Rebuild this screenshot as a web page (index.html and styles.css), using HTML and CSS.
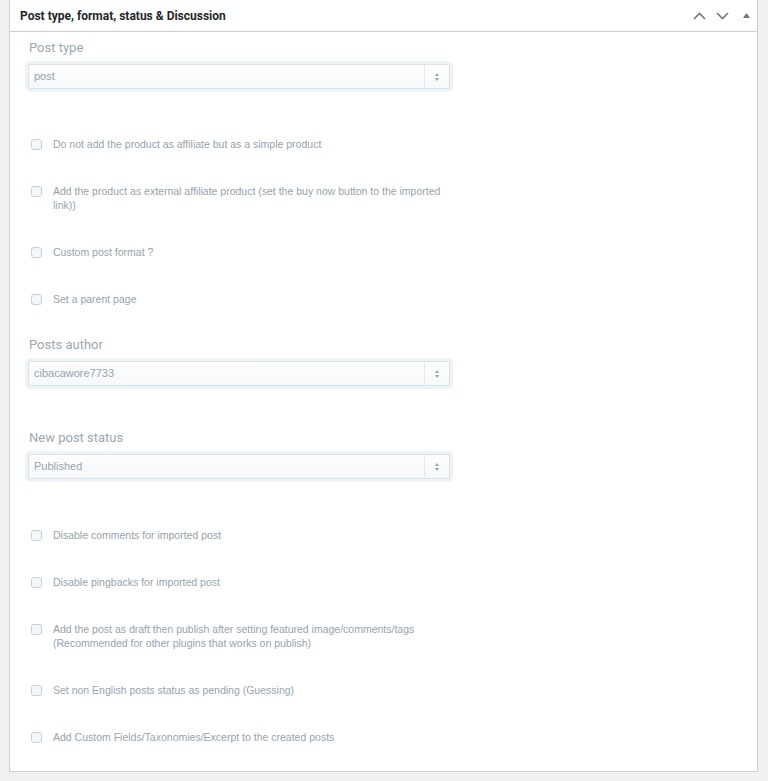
FILE: index.html
```html
<!DOCTYPE html>
<html lang="en">
<head>
    <meta charset="UTF-8">
    <meta name="viewport" content="width=device-width, initial-scale=1.0">
    <title>Post type, format, status &amp; Discussion</title>
    <link rel="stylesheet" href="styles.css">
</head>
<body>
    <div class="postbox">
        <!-- Cabeçalho da caixa -->
        <div class="postbox-header">
            <h2 class="postbox-title">Post type, format, status &amp; Discussion</h2>
            <div class="handle-actions">
                <svg class="handle" width="13" height="8" viewBox="0 0 13 8"><path d="M1 7 L6.5 1.5 L12 7" fill="none" stroke="#72777c" stroke-width="1.6"/></svg>
                <svg class="handle" width="13" height="8" viewBox="0 0 13 8"><path d="M1 1 L6.5 6.5 L12 1" fill="none" stroke="#72777c" stroke-width="1.6"/></svg>
                <svg class="handle toggle" width="7" height="5" viewBox="0 0 7 5"><path d="M0 5 L3.5 0 L7 5 Z" fill="#72777c"/></svg>
            </div>
        </div>

        <div class="inside">
            <div class="field">
                <label class="field-label">Post type</label>
                <div class="select-wrap">
                    <div class="select">
                        <span class="select-value">post</span>
                        <span class="select-arrow"><i class="up"></i><i class="down"></i></span>
                    </div>
                </div>
            </div>

            <div class="check first">
                <span class="box"></span>
                <span class="check-text">Do not add the product as affiliate but as a simple product</span>
            </div>
            <div class="check">
                <span class="box"></span>
                <span class="check-text">Add the product as external affiliate product (set the buy now button to the imported link))</span>
            </div>
            <div class="check">
                <span class="box"></span>
                <span class="check-text">Custom post format ?</span>
            </div>
            <div class="check">
                <span class="box"></span>
                <span class="check-text">Set a parent page</span>
            </div>

            <div class="field author">
                <label class="field-label">Posts author</label>
                <div class="select-wrap">
                    <div class="select">
                        <span class="select-value">cibacawore7733</span>
                        <span class="select-arrow"><i class="up"></i><i class="down"></i></span>
                    </div>
                </div>
            </div>

            <div class="field status">
                <label class="field-label">New post status</label>
                <div class="select-wrap">
                    <div class="select">
                        <span class="select-value">Published</span>
                        <span class="select-arrow"><i class="up"></i><i class="down"></i></span>
                    </div>
                </div>
            </div>

            <div class="check first-after-status">
                <span class="box"></span>
                <span class="check-text">Disable comments for imported post</span>
            </div>
            <div class="check">
                <span class="box"></span>
                <span class="check-text">Disable pingbacks for imported post</span>
            </div>
            <div class="check">
                <span class="box"></span>
                <span class="check-text">Add the post as draft then publish after setting featured image/comments/tags (Recommended for other plugins that works on publish)</span>
            </div>
            <div class="check">
                <span class="box"></span>
                <span class="check-text">Set non English posts status as pending (Guessing)</span>
            </div>
            <div class="check">
                <span class="box"></span>
                <span class="check-text">Add Custom Fields/Taxonomies/Excerpt to the created posts</span>
            </div>
        </div>
    </div>
</body>
</html>
```

FILE: styles.css
```css
html, body {
    margin: 0;
    padding: 0;
}

body {
    background: #f1f1f1;
    font-family: "Liberation Sans", Arial, sans-serif;
    color: #8c9ba5;
}

/* Caixa principal */
.postbox {
    margin: -1px 0 0 9px;
    width: 747px;
    background: #fff;
    border: 1px solid #ccd0d4;
    box-shadow: 0 1px 1px rgba(0, 0, 0, 0.04);
}

.postbox-header {
    display: flex;
    align-items: center;
    justify-content: space-between;
    height: 31px;
    border-bottom: 1px solid #ccd0d4;
}

.postbox-title {
    margin: 0 0 0 10px;
    font-family: Roboto, "Liberation Sans", sans-serif;
    font-size: 12px;
    font-weight: 700;
    color: #23282d;
}

.handle-actions {
    display: flex;
    align-items: center;
    gap: 10px;
    margin-right: 7px;
}

.handle.toggle {
    margin-left: 4px;
}

/* Conteúdo */
.inside {
    display: flex;
    flex-direction: column;
    padding: 8px 15px 27px;
}

.field-label {
    display: block;
    margin: 0 0 5px 4px;
    font-family: Roboto, "Liberation Sans", sans-serif;
    font-size: 13px;
    line-height: 16px;
    color: #9aa8b0;
}

.field.author {
    margin-top: 31px;
}

.field.status {
    margin-top: 41px;
}

.select-wrap {
    width: 422px;
    padding: 3px;
    background: #edf3f6;
    border-radius: 5px;
}

.select {
    display: flex;
    height: 23px;
    border: 1px solid #d9e2e7;
    border-radius: 2px;
    background: linear-gradient(#fdfdfd, #f6f8f9);
}

.select-value {
    flex: 1;
    padding-left: 5px;
    font-size: 11px;
    line-height: 23px;
    color: #97a4ac;
}

.select-arrow {
    display: flex;
    flex-direction: column;
    align-items: center;
    justify-content: center;
    gap: 2px;
    width: 24px;
    border-left: 1px solid #e3e9ec;
}

.select-arrow i {
    width: 0;
    height: 0;
    border-left: 2.5px solid transparent;
    border-right: 2.5px solid transparent;
}

.select-arrow .up {
    border-bottom: 3px solid #9aa5ab;
}

.select-arrow .down {
    border-top: 3px solid #9aa5ab;
}

/* Caixas de seleção */
.check {
    display: flex;
    align-items: flex-start;
    margin-top: 33px;
    width: 430px;
}

.check.first {
    margin-top: 45px;
}

.check.first-after-status {
    margin-top: 46px;
}

.box {
    flex: none;
    width: 9px;
    height: 9px;
    margin: 2px 11px 0 6px;
    border: 1px solid #c5d0d6;
    border-radius: 3px;
    background: #f4f7f9;
}

.check-text {
    font-size: 10.5px;
    line-height: 14px;
    color: #95a3ac;
}
```
